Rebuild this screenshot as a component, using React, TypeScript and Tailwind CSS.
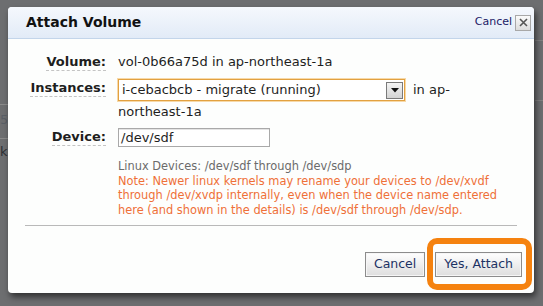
import React from "react";

const font = { fontFamily: '"DejaVu Sans", Verdana, sans-serif' };

function Label({ children }: { children: React.ReactNode }) {
  return (
    <div className="flex w-[98px] shrink-0 justify-end">
      <span className="border-b border-dashed border-[#c4c4c4] text-[13px] font-bold leading-[16px] text-[#1e1e1e]">
        {children}
      </span>
    </div>
  );
}

function Button({ children }: { children: React.ReactNode }) {
  return (
    <div className="flex h-[25px] items-center justify-center border border-[#8c8c8c] bg-gradient-to-b from-[#ffffff] to-[#dedede] px-[8px] text-[12.5px] text-[#1c3264] shadow-[inset_0_0_0_1px_#f6f6f6]">
      {children}
    </div>
  );
}

export default function App() {
  return (
    <div
      className="relative h-[306px] w-[543px] overflow-hidden bg-[#6d6e70] pl-[8px] pt-[7px]"
      style={font}
    >
      {/* faint page behind the overlay */}
      <div className="absolute left-0 top-[104px] h-px w-[8px] bg-[#8a8a8a]" />
      <div className="absolute left-0 top-[138px] h-px w-[8px] bg-[#8a8a8a]" />
      <div className="absolute left-0 top-[112px] text-[13px] leading-[16px] text-[#5a5f66]">5</div>
      <div className="absolute left-0 top-[144px] text-[13px] leading-[16px] text-[#2c2f33]">k</div>
      <div className="absolute right-0 top-[40px] h-px w-[8px] bg-[#828282]" />
      <div className="absolute right-0 top-[100px] h-px w-[8px] bg-[#828282]" />

      <div className="relative flex h-[286px] w-[526px] flex-col overflow-hidden rounded-[4px] bg-[#fdfefd] shadow-[2px_4px_6px_rgba(0,0,0,0.55)]">
        <div className="flex h-[32px] shrink-0 items-center justify-between border-b border-[#c3d5ea] bg-gradient-to-b from-[#f5f8fd] to-[#e2ebf7] pl-[18px] pr-[3px]">
          <div className="text-[14px] font-bold text-[#111]">Attach Volume</div>
          <div className="flex items-center gap-[3px]">
            <span className="text-[11px] text-[#1a1a66]">Cancel</span>
            <div className="flex h-[16px] w-[16px] items-center justify-center border border-[#a8a8a8] bg-gradient-to-b from-[#fbfbfb] to-[#dcdcdc]">
              <svg width="9" height="9" viewBox="0 0 9 9">
                <path d="M1 1L8 8M8 1L1 8" stroke="#555" strokeWidth="1.6" />
              </svg>
            </div>
          </div>
        </div>

        <div className="flex flex-col pt-[15px] text-[13px] text-[#1e1e1e]">
          <div className="flex items-start gap-[12px]">
            <Label>Volume:</Label>
            <span className="leading-[16px]">vol-0b66a75d in ap-northeast-1a</span>
          </div>

          <div className="mt-[8px] flex items-start gap-[12px]">
            <div className="pt-[1px]">
              <Label>Instances:</Label>
            </div>
            <div className="flex flex-col">
              <div className="flex items-center gap-[8px]">
                <div className="flex h-[22px] w-[287px] items-center justify-between border border-[#e2a140] bg-white pl-[3px] pr-[1px] shadow-[0_0_0_1px_#f7d9a8]">
                  <span className="leading-[16px]">i-cebacbcb - migrate (running)</span>
                  <div className="flex h-[17px] w-[17px] items-center justify-center border border-[#7a7a7a] bg-gradient-to-b from-[#f4f4f4] to-[#d4d4d4]">
                    <svg width="8" height="5" viewBox="0 0 8 5">
                      <path d="M0 0H8L4 4.5Z" fill="#111" />
                    </svg>
                  </div>
                </div>
                <span className="leading-[16px]">in ap-</span>
              </div>
              <span className="mt-[3px] leading-[16px]">northeast-1a</span>
            </div>
          </div>

          <div className="mt-[8px] flex items-center gap-[12px]">
            <Label>Device:</Label>
            <div className="flex h-[19px] w-[152px] items-center border border-[#a9a9a9] bg-white pl-[2px] shadow-[inset_0_1px_0_#e4e4e4]">
              <span className="leading-[16px]">/dev/sdf</span>
            </div>
          </div>

          <div className="ml-[110px] mt-[12px] text-[11.4px] leading-[14.5px]">
            <div className="text-[#6b6b6b]">Linux Devices: /dev/sdf through /dev/sdp</div>
            <div className="text-[#ef7038]">
              Note: Newer linux kernels may rename your devices to /dev/xvdf
              <br />
              through /dev/xvdp internally, even when the device name entered
              <br />
              here (and shown in the details) is /dev/sdf through /dev/sdp.
            </div>
          </div>

          <div className="mx-[17px] mt-[8px] h-px bg-[#b9b9b9]" />

          <div className="mr-[12px] mt-[26px] flex justify-end gap-[10px]">
            <Button>Cancel</Button>
            <div className="relative">
              <div className="pointer-events-none absolute -bottom-[13px] -left-[8px] -right-[10px] -top-[14px] rounded-[10px] border-[6px] border-[#f5820f]" />
              <Button>Yes, Attach</Button>
            </div>
          </div>
        </div>
      </div>
    </div>
  );
}
